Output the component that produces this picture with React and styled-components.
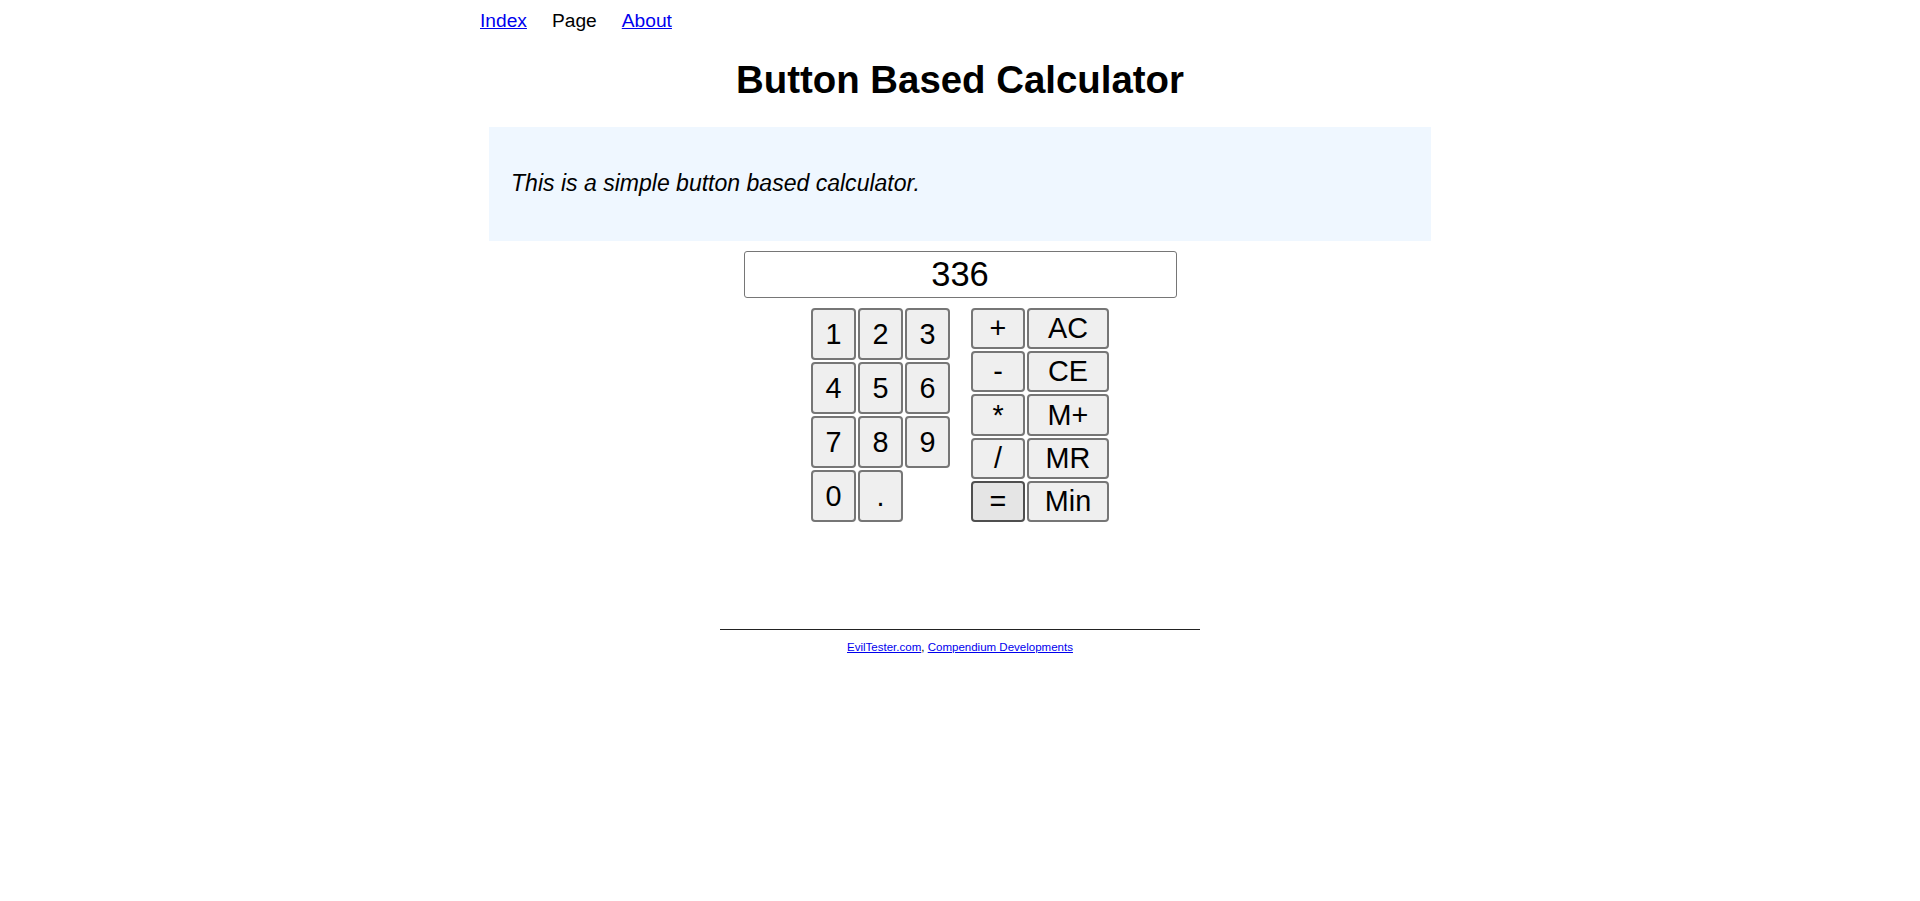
import React from 'react';
import styled, { createGlobalStyle } from 'styled-components';

const GlobalStyle = createGlobalStyle`
  html, body {
    margin: 0;
    padding: 0;
    background: #ffffff;
  }
  body {
    font-family: "Liberation Sans", Arial, sans-serif;
    font-size: 19.2px;
    color: #000000;
  }
`;

const Page = styled.div`
  width: 960px;
  margin: 0 auto;
  display: flex;
  flex-direction: column;
`;

const Nav = styled.nav`
  display: flex;
  gap: 25px;
  padding-top: 10px;
  line-height: 22px;
  height: 32px;
  box-sizing: border-box;
`;

const NavLink = styled.a`
  color: #0000ee;
  text-decoration: underline;
  cursor: pointer;
`;

const Current = styled.span`
  color: #000000;
`;

const Title = styled.h1`
  margin: 26px 0 0;
  font-size: 38.4px;
  line-height: 44px;
  font-weight: bold;
  text-align: center;
`;

const Intro = styled.div`
  margin: 25px 9px 0;
  padding: 43px 22px 45px 22px;
  background: #eff7ff;
  font-size: 23.04px;
  line-height: 26px;
  font-style: italic;
`;

const Calculator = styled.form`
  display: flex;
  flex-direction: column;
  align-items: center;
  margin-top: 10px;
`;

const Display = styled.input`
  width: 433px;
  height: 47px;
  box-sizing: border-box;
  border: 1px solid #767676;
  border-radius: 3px;
  font-family: "Liberation Sans", Arial, sans-serif;
  font-size: 34.5px;
  text-align: center;
  color: #000000;
  padding: 0;
  outline: none;
`;

const Keypad = styled.div`
  display: flex;
  gap: 21px;
  margin-top: 10px;
`;

const KeyGrid = styled.div`
  display: grid;
  grid-template-columns: ${(p) => p.$cols};
  grid-template-rows: repeat(${(p) => p.$rows}, 1fr);
  gap: 2px;
  height: 214px;
`;

const Key = styled.button`
  font-family: "Liberation Sans", Arial, sans-serif;
  font-size: 28.8px;
  color: #000000;
  background: ${(p) => (p.$hover ? '#e5e5e5' : '#efefef')};
  border: 2px solid ${(p) => (p.$hover ? '#4f4f4f' : '#767676')};
  border-radius: 4px;
  padding: 0;
  cursor: pointer;
  line-height: 1;
  &:hover {
    background: #e5e5e5;
    border-color: #4f4f4f;
  }
`;

const Rule = styled.hr`
  width: 480px;
  margin: 107px auto 0;
  border: 0;
  border-top: 1px solid #222222;
  height: 0;
`;

const Footer = styled.div`
  margin-top: 11px;
  text-align: center;
  font-size: 11.52px;
  line-height: 13px;
`;

const digits = ['1', '2', '3', '4', '5', '6', '7', '8', '9', '0', '.'];
const ops = [
  ['+', 'AC'],
  ['-', 'CE'],
  ['*', 'M+'],
  ['/', 'MR'],
  ['=', 'Min'],
];

export default function App() {
  return (
    <>
      <GlobalStyle />
      <Page>
        <Nav>
          <NavLink href="#">Index</NavLink>
          <Current>Page</Current>
          <NavLink href="#">About</NavLink>
        </Nav>
        <Title>Button Based Calculator</Title>
        <Intro>This is a simple button based calculator.</Intro>
        <Calculator onSubmit={(e) => e.preventDefault()}>
          <Display type="text" readOnly value="336" />
          <Keypad>
            <KeyGrid $cols="repeat(3, 45px)" $rows={4}>
              {digits.map((d) => (
                <Key type="button" key={d}>{d}</Key>
              ))}
            </KeyGrid>
            <KeyGrid $cols="54px 82px" $rows={5}>
              {ops.map(([op, mem]) => (
                <React.Fragment key={op}>
                  <Key type="button" $hover={op === '='}>{op}</Key>
                  <Key type="button">{mem}</Key>
                </React.Fragment>
              ))}
            </KeyGrid>
          </Keypad>
        </Calculator>
        <Rule />
        <Footer>
          <NavLink href="#">EvilTester.com</NavLink>, <NavLink href="#">Compendium Developments</NavLink>
        </Footer>
      </Page>
    </>
  );
}
